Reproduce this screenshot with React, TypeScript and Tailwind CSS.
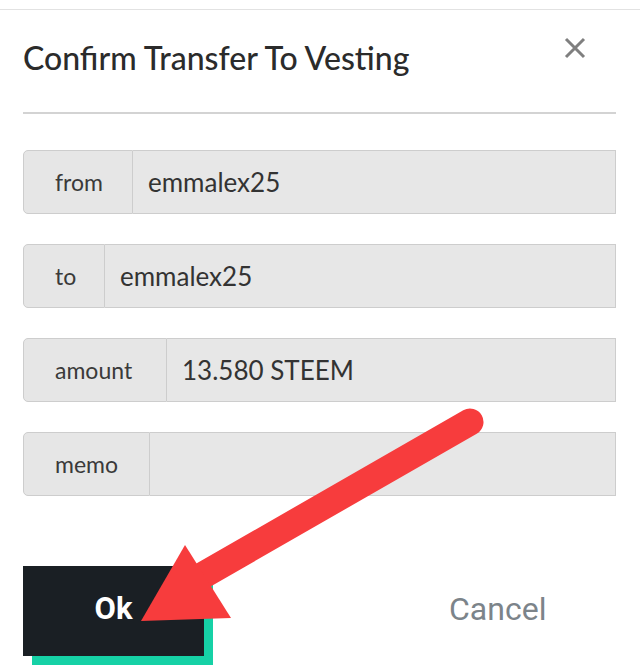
import React from "react";

const rows = [
  { label: "from", value: "emmalex25", labelW: "w-[110px]" },
  { label: "to", value: "emmalex25", labelW: "w-[82px]" },
  { label: "amount", value: "13.580 STEEM", labelW: "w-[144px]" },
  { label: "memo", value: "", labelW: "w-[127px]" },
];

function Field({ label, value, labelW }: { label: string; value: string; labelW: string }) {
  return (
    <div className="flex h-[64px] w-full">
      <div
        className={`${labelW} shrink-0 flex items-center pl-[31px] text-[23px] text-[#3a3a3a] bg-[#e6e6e6] border border-[#cdcdcd] rounded-l-[5px]`}
      >
        {label}
      </div>
      <div className="flex-1 flex items-center pl-[15px] text-[26px] text-[#333] bg-[#e7e7e7] border border-l-0 border-[#cdcdcd]">
        {value}
      </div>
    </div>
  );
}

export default function App() {
  return (
    <div
      className="relative w-[640px] h-[667px] bg-white overflow-hidden"
      style={{ fontFamily: "Lato, 'Noto Sans', sans-serif" }}
    >
      <div className="h-[10px] border-b border-[#e2e2e2]" />

      <div className="px-[23px] pr-[24px]">
        <div className="flex items-start justify-between h-[102px] pt-[28px]">
          <h1 className="text-[32px] leading-[40px] text-[#2b2b2b] font-medium">
            Confirm Transfer To Vesting
          </h1>
          <button type="button" className="mr-[30px] mt-[-1px] text-[#7f7f7f]">
            <svg width="22" height="22" viewBox="0 0 22 22" fill="none">
              <path d="M2 2 L20 20 M20 2 L2 20" stroke="currentColor" strokeWidth="3" />
            </svg>
          </button>
        </div>
        <div className="h-[2px] bg-[#d3d3d3]" />

        <div className="flex flex-col gap-[30px] mt-[36px]">
          {rows.map((r) => (
            <Field key={r.label} {...r} />
          ))}
        </div>

        <div className="flex items-center mt-[70px]">
          <button
            type="button"
            className="w-[181px] h-[90px] pb-[4px] bg-[#1a1f24] text-white text-[31px] font-bold shadow-[9px_9px_0_0_#16d1a6]"
            style={{ fontFamily: "Roboto, sans-serif" }}
          >
            Ok
          </button>
          <button
            type="button"
            className="ml-[245px] pb-[4px] text-[32px] text-[#7c848a]"
            style={{ fontFamily: "Roboto, sans-serif" }}
          >
            Cancel
          </button>
        </div>
      </div>

      <svg
        className="absolute inset-0 pointer-events-none"
        width="640"
        height="667"
        viewBox="0 0 640 667"
      >
        <line x1="470" y1="422" x2="200" y2="577" stroke="#f73c3d" strokeWidth="27" strokeLinecap="round" />
        <polygon points="185,545 231,618 141,621" fill="#f73c3d" />
      </svg>
    </div>
  );
}
